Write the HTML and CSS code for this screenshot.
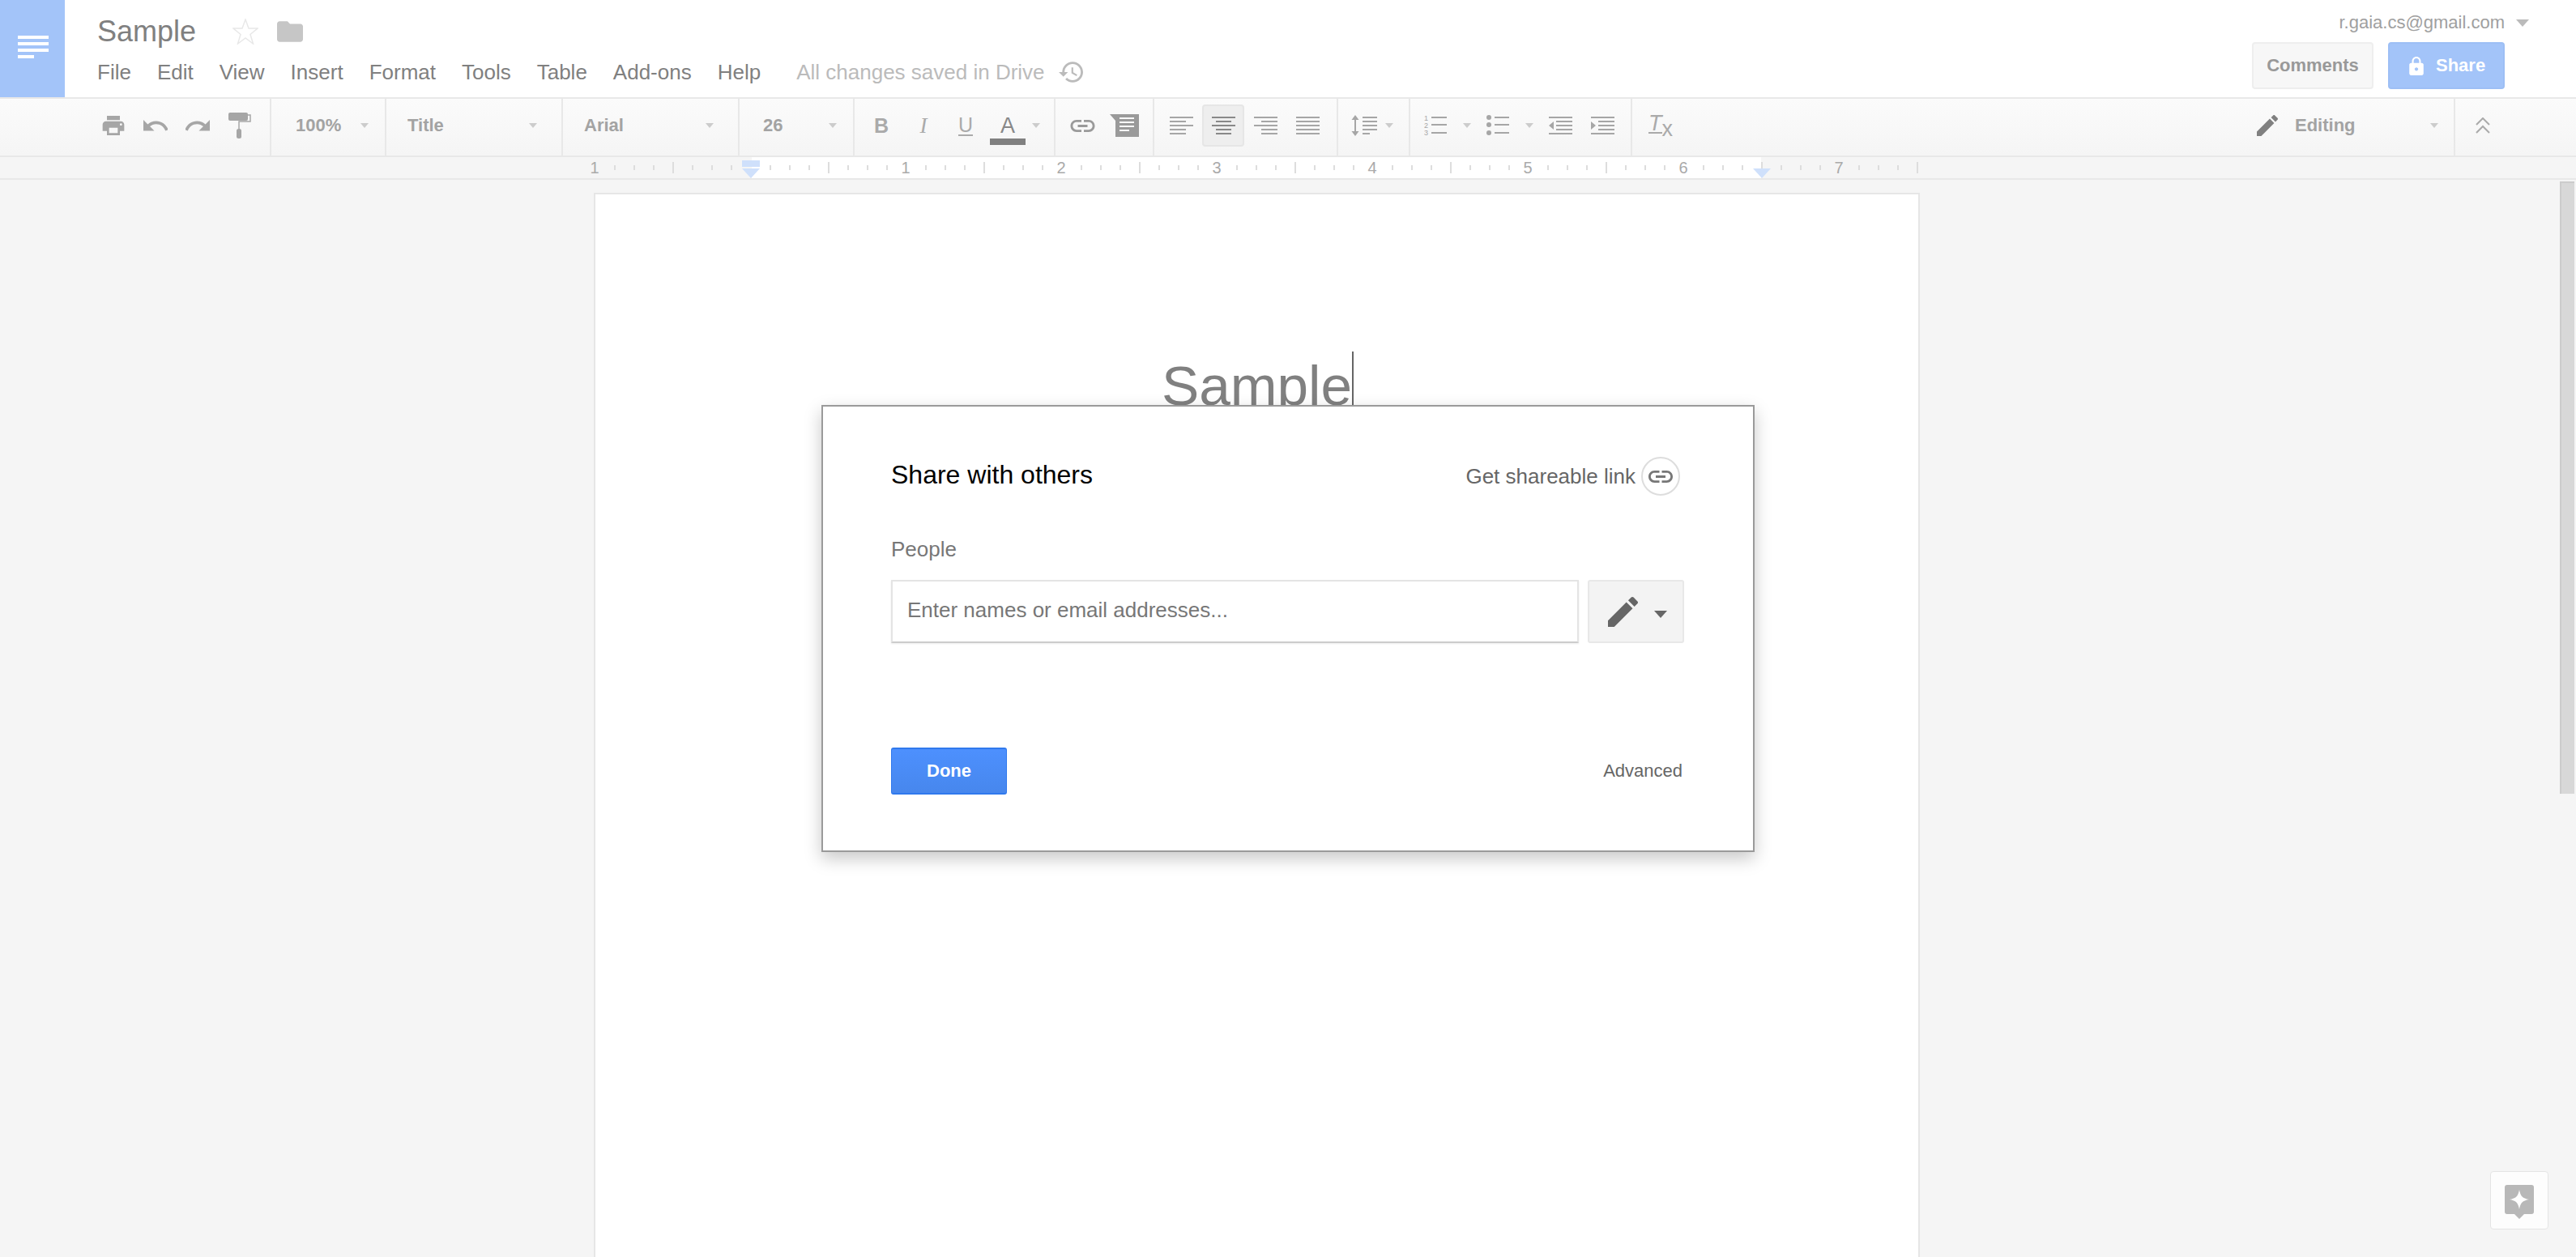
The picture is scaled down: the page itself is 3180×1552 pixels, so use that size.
FILE: index.html
```html
<!DOCTYPE html>
<html lang="en">
<head>
<meta charset="UTF-8">
<meta name="viewport" content="width=device-width, initial-scale=1.0">
<title>Sample - Share with others</title>
<link rel="stylesheet" href="styles.css">
</head>
<body>

<!-- top bar -->
<header class="topbar">
    <div class="logo">
        <span class="logo-line"></span>
        <span class="logo-line"></span>
        <span class="logo-line"></span>
        <span class="logo-line short"></span>
    </div>
    <div class="doc-info">
        <div class="title-row">
            <span class="doc-title">Sample</span>
            <svg class="star" viewBox="0 0 32 32"><polygon points="16,1 20,12 31,12 22,19.500 25.500,31 16,24 6.500,31 10,19.500 1,12 12,12"/></svg>
            <svg class="folder" viewBox="2 4 20 16"><path d="M10 4H4c-1.100 0-1.990.9-1.990 2L2 18c0 1.100.9 2 2 2h16c1.100 0 2-.9 2-2V8c0-1.100-.9-2-2-2h-8l-2-2z"/></svg>
        </div>
        <nav class="menu-row">
            <span>File</span>
            <span>Edit</span>
            <span>View</span>
            <span>Insert</span>
            <span>Format</span>
            <span>Tools</span>
            <span>Table</span>
            <span>Add-ons</span>
            <span>Help</span>
            <span class="saved">All changes saved in Drive</span>
            <svg class="history" viewBox="1 3 21 18"><path d="M13 3c-4.970 0-9 4.030-9 9H1l3.890 3.890.07.14L9 12H6c0-3.870 3.130-7 7-7s7 3.130 7 7-3.130 7-7 7c-1.930 0-3.680-.79-4.940-2.060l-1.420 1.420C8.270 19.990 10.510 21 13 21c4.970 0 9-4.030 9-9s-4.030-9-9-9zm-1 5v5l4.280 2.540.72-1.210-3.500-2.080V8H12z"/></svg>
        </nav>
    </div>
    <div class="top-right">
        <div class="account">
            <span>r.gaia.cs@gmail.com</span>
            <i class="account-arrow"></i>
        </div>
        <div class="top-buttons">
            <button class="btn-comments">Comments</button>
            <button class="btn-share">
                <svg class="lock" viewBox="4 1 16 21"><path d="M18 8h-1V6c0-2.760-2.240-5-5-5S7 3.240 7 6v2H6c-1.100 0-2 .9-2 2v10c0 1.100.9 2 2 2h12c1.100 0 2-.9 2-2V10c0-1.100-.9-2-2-2zm-6 9c-1.100 0-2-.9-2-2s.9-2 2-2 2 .9 2 2-.9 2-2 2zm3.100-9H8.900V6c0-1.710 1.390-3.100 3.100-3.100 1.710 0 3.100 1.390 3.100 3.100v2z"/></svg>
                Share
            </button>
        </div>
    </div>
</header>

<!-- toolbar -->
<div class="toolbar">
    <div class="group g-history">
        <span class="tb-btn"><svg class="ic-print" viewBox="2 3 20 18"><path d="M19 8H5c-1.660 0-3 1.340-3 3v6h4v4h12v-4h4v-6c0-1.660-1.340-3-3-3zm-3 11H8v-5h8v5zm3-7c-.55 0-1-.45-1-1s.45-1 1-1 1 .45 1 1-.45 1-1 1zm-1-9H6v4h12V3z"/></svg></span>
        <span class="tb-btn"><svg class="ic-undo" viewBox="2 7 20 10"><path d="M12.500 8c-2.650 0-5.050.99-6.900 2.600L2 7v9h9l-3.620-3.620c1.390-1.160 3.160-1.880 5.120-1.880 3.540 0 6.550 2.310 7.600 5.500l2.370-.78C21.080 11.030 17.150 8 12.500 8z"/></svg></span>
        <span class="tb-btn"><svg class="ic-undo" viewBox="2 7 20 10"><path d="M18.400 10.600C16.550 8.990 14.150 8 11.500 8c-4.650 0-8.580 3.030-9.960 7.220L3.900 16c1.050-3.190 4.050-5.500 7.600-5.500 1.950 0 3.730.72 5.120 1.880L13 16h9V7l-3.600 3.600z"/></svg></span>
        <span class="tb-btn"><svg class="ic-roller" viewBox="0 0 28 32"><rect width="24" height="10" rx="2"/><path class="roller-arm" d="M24 3h3v8H13v9"/><rect x="10" y="20" width="6" height="12" rx="2.500"/></svg></span>
    </div>
    <div class="group tb-select g-zoom"><span>100%</span><i class="arrow"></i></div>
    <div class="group tb-select g-style"><span>Title</span><i class="arrow"></i></div>
    <div class="group tb-select g-style"><span>Arial</span><i class="arrow"></i></div>
    <div class="group tb-select g-size"><span>26</span><i class="arrow"></i></div>
    <div class="group g-text">
        <span class="tb-btn glyph-b">B</span>
        <span class="tb-btn glyph-i">I</span>
        <span class="tb-btn"><span class="glyph-u">U</span></span>
        <span class="tb-btn color-btn"><span class="glyph-a">A</span><span class="color-bar"></span></span>
        <i class="arrow"></i>
    </div>
    <div class="group g-insert">
        <span class="tb-btn"><svg class="ic-link" viewBox="2 7 20 10"><path d="M3.900 12c0-1.710 1.390-3.100 3.100-3.100h4V7H7c-2.760 0-5 2.240-5 5s2.240 5 5 5h4v-1.900H7c-1.710 0-3.100-1.390-3.100-3.100zM8 13h8v-2H8v2zm9-6h-4v1.900h4c1.710 0 3.100 1.390 3.100 3.100s-1.390 3.100-3.100 3.100h-4V17h4c2.760 0 5-2.240 5-5s-2.240-5-5-5z"/></svg></span>
        <span class="tb-btn"><svg class="ic-comment" viewBox="0 0 36 28"><path d="M0 0h36v28H7V8z"/><path class="cut" d="M12 4h18v2H12zM12 9h18v2H12zM12 14h18v2H12zM12 19h12v2H12z"/></svg></span>
    </div>
    <div class="group g-align">
        <span class="tb-btn"><svg class="ic-lines" viewBox="0 0 29 22"><path d="M0 0h29v2H0zM0 5h20v2H0zM0 10h29v2H0zM0 15h20v2H0zM0 20h20v2H0z"/></svg></span>
        <span class="tb-btn active"><svg class="ic-lines" viewBox="0 0 29 22"><path d="M0 0h29v2H0zM5 5h19v2H5zM0 10h29v2H0zM5 15h19v2H5zM5 20h19v2H5z"/></svg></span>
        <span class="tb-btn"><svg class="ic-lines" viewBox="0 0 29 22"><path d="M0 0h29v2H0zM9 5h20v2H9zM0 10h29v2H0zM9 15h20v2H9zM9 20h20v2H9z"/></svg></span>
        <span class="tb-btn"><svg class="ic-lines" viewBox="0 0 29 22"><path d="M0 0h29v2H0zM0 5h29v2H0zM0 10h29v2H0zM0 15h29v2H0zM0 20h29v2H0z"/></svg></span>
    </div>
    <div class="group g-spacing">
        <span class="tb-btn"><svg class="ic-spacing" viewBox="0 0 32 26"><path d="M5 0l4.500 6H6v14h3.500L5 26 .5 20H4V6H.5zM14 2h18v2H14zM14 7h18v2H14zM14 12h18v2H14zM14 17h18v2H14zM14 22h9v2h-9z"/></svg></span>
        <i class="arrow"></i>
    </div>
    <div class="group g-list">
        <span class="tb-btn"><svg class="ic-list" viewBox="0 0 28 26"><text x="0" y="7">1</text><text x="0" y="16">2</text><text x="0" y="25">3</text><path d="M9 2h19v2H9zM9 11h19v2H9zM9 21h19v2H9z"/></svg></span>
        <span class="drop"><i class="arrow"></i></span>
        <span class="tb-btn"><svg class="ic-list" viewBox="0 0 28 26"><circle cx="3" cy="3" r="3"/><circle cx="3" cy="12" r="3"/><circle cx="3" cy="22" r="3"/><path d="M10 2h18v2H10zM10 11h18v2H10zM10 21h18v2H10z"/></svg></span>
        <span class="drop"><i class="arrow"></i></span>
        <span class="tb-btn"><svg class="ic-lines" viewBox="0 0 29 22"><path d="M0 0h29v2H0zM9 5h20v2H9zM9 10h20v2H9zM9 15h20v2H9zM0 20h29v2H0zM6 6v10l-6-5z"/></svg></span>
        <span class="tb-btn"><svg class="ic-lines" viewBox="0 0 29 22"><path d="M0 0h29v2H0zM9 5h20v2H9zM9 10h20v2H9zM9 15h20v2H9zM0 20h29v2H0zM0 6v10l6-5z"/></svg></span>
    </div>
    <div class="g-clear">
        <span class="clear-t">T</span><span class="clear-x">x</span>
    </div>
    <div class="group g-mode">
        <svg class="ic-pencil" viewBox="3 3 18 18"><path d="M3 17.250V21h3.750L17.810 9.940l-3.750-3.750L3 17.250zM20.710 7.040c.39-.39.39-1.020 0-1.410l-2.340-2.340c-.39-.39-1.020-.39-1.410 0l-1.830 1.830 3.750 3.750 1.830-1.830z"/></svg>
        <span class="mode-label">Editing</span>
        <i class="arrow"></i>
    </div>
    <div class="g-collapse">
        <svg class="ic-chevrons" viewBox="0 0 18 20"><path d="M1 9l8-8 8 8M1 19l8-8 8 8"/></svg>
    </div>
</div>

<!-- ruler -->
<div class="ruler">
    <div class="ruler-scale">
        <div class="ruler-labels">
            <span>1</span>
            <span></span>
            <span>1</span>
            <span>2</span>
            <span>3</span>
            <span>4</span>
            <span>5</span>
            <span>6</span>
            <span>7</span>
        </div>
        <i class="indent-first"></i>
        <i class="indent-left"></i>
        <i class="indent-right"></i>
    </div>
</div>

<!-- document -->
<main class="workspace">
    <div class="page">
        <h1 class="doc-heading">Sample<span class="cursor"></span></h1>
    </div>
    <div class="scrollbar"></div>
    <div class="explore">
        <svg viewBox="0 0 36 42"><path d="M3 0h30a3 3 0 0 1 3 3v30a3 3 0 0 1-3 3h-9l-6 6-6-6H3a3 3 0 0 1-3-3V3a3 3 0 0 1 3-3z"/><path class="spark" d="M18 6c1.500 8 4 10.500 12 12-8 1.500-10.500 4-12 12-1.500-8-4-10.500-12-12 8-1.500 10.500-4 12-12z"/></svg>
    </div>

    <!-- share dialog -->
    <div class="dialog">
        <div class="dialog-head">
            <h2>Share with others</h2>
            <div class="shareable">
                <span>Get shareable link</span>
                <span class="link-circle"><svg viewBox="2 7 20 10"><path d="M3.900 12c0-1.710 1.390-3.100 3.100-3.100h4V7H7c-2.760 0-5 2.240-5 5s2.240 5 5 5h4v-1.900H7c-1.710 0-3.100-1.390-3.100-3.100zM8 13h8v-2H8v2zm9-6h-4v1.900h4c1.710 0 3.100 1.390 3.100 3.100s-1.390 3.100-3.100 3.100h-4V17h4c2.760 0 5-2.240 5-5s-2.240-5-5-5z"/></svg></span>
            </div>
        </div>
        <div class="people-label">People</div>
        <div class="people-row">
            <input class="people-input" type="text" placeholder="Enter names or email addresses...">
            <button class="perm-btn">
                <svg viewBox="3 3 18 18"><path d="M3 17.250V21h3.750L17.810 9.940l-3.750-3.750L3 17.250zM20.710 7.040c.39-.39.39-1.020 0-1.410l-2.340-2.340c-.39-.39-1.020-.39-1.410 0l-1.830 1.830 3.750 3.750 1.830-1.830z"/></svg>
                <i class="perm-arrow"></i>
            </button>
        </div>
        <div class="dialog-foot">
            <button class="btn-done">Done</button>
            <span class="advanced">Advanced</span>
        </div>
    </div>
</main>

</body>
</html>
```

FILE: styles.css
```css
* {
    margin: 0;
    padding: 0;
    box-sizing: border-box;
}

html, body {
    height: 100%;
}

body {
    display: flex;
    flex-direction: column;
    overflow: hidden;
    background: #f5f5f5;
    font-family: "Liberation Sans", Arial, sans-serif;
}

button {
    font-family: inherit;
}

i {
    display: block;
}

/* top bar */
.topbar {
    display: flex;
    flex: none;
    height: 122px;
    background: #fff;
    border-bottom: 2px solid #e8e8e8;
}

.logo {
    display: flex;
    flex-direction: column;
    gap: 4px;
    width: 80px;
    padding: 44px 20px 0 22px;
    background: #a3c4f9;
}

.logo-line {
    display: block;
    height: 4px;
    background: #fff;
}

.logo-line.short {
    width: 20px;
}

.doc-info {
    padding: 19px 0 0 40px;
}

.title-row {
    display: flex;
    align-items: center;
    height: 40px;
}

.doc-title {
    font-size: 36px;
    line-height: 40px;
    color: #808080;
}

.star {
    width: 32px;
    height: 32px;
    margin-left: 45px;
    fill: none;
    stroke: #e8e8e8;
    stroke-width: 1.5;
}

.folder {
    width: 32px;
    height: 26px;
    margin-left: 23px;
    fill: #c6c6c6;
}

.menu-row {
    display: flex;
    align-items: center;
    gap: 32px;
    margin-top: 15px;
    font-size: 26px;
    line-height: 30px;
    color: #808080;
}

.saved {
    margin-left: 12px;
    color: #bbb;
}

.history {
    width: 30px;
    height: 26px;
    margin-left: -15px;
    fill: #bbb;
}

.top-right {
    margin-left: auto;
    padding: 15px 58px 0 0;
}

.account {
    display: flex;
    align-items: center;
    justify-content: flex-end;
    gap: 14px;
    font-size: 22px;
    line-height: 26px;
    color: #a0a0a0;
}

.account-arrow {
    width: 0;
    height: 0;
    border-left: 8px solid transparent;
    border-right: 8px solid transparent;
    border-top: 9px solid #bbb;
}

.top-buttons {
    display: flex;
    gap: 18px;
    margin: 11px 30px 0 0;
}

.top-buttons button {
    height: 58px;
    font-size: 22px;
    font-weight: bold;
    border-radius: 4px;
}

.btn-comments {
    width: 150px;
    color: #999;
    background: #f7f7f7;
    border: 2px solid #eee;
}

.btn-share {
    display: flex;
    align-items: center;
    width: 144px;
    padding-left: 24px;
    color: #fff;
    background: #a3c4f9;
    border: 2px solid #9dbff5;
}

.lock {
    width: 18px;
    height: 23px;
    margin-right: 15px;
    fill: #fff;
}

/* toolbar */
.toolbar {
    display: flex;
    flex: none;
    height: 72px;
    background: linear-gradient(#fbfbfb, #f5f5f5);
    border-bottom: 2px solid #e8e8e8;
}

.group {
    display: flex;
    align-items: center;
    flex: none;
    padding-bottom: 4px;
    border-right: 2px solid #e8e8e8;
}

.g-history { width: 335px; padding-left: 114px; }
.g-zoom { width: 142px; }
.g-style { width: 218px; }
.g-size { width: 142px; }
.g-text { width: 248px; padding-left: 7px; }
.g-insert { width: 122px; padding-left: 7px; }
.g-align { width: 227px; padding-left: 7px; }
.g-spacing { width: 89px; padding-left: 6px; }
.g-list { width: 274px; padding-left: 5px; }

.tb-select {
    justify-content: space-between;
    padding-left: 26px;
    padding-right: 20px;
    font-size: 22px;
    font-weight: bold;
    color: #a3a3a3;
}

.g-style {
    padding-right: 30px;
}

.g-zoom {
    padding-left: 30px;
}

.g-size {
    padding-left: 29px;
}

.tb-btn {
    display: flex;
    align-items: center;
    justify-content: center;
    flex: none;
    width: 52px;
    height: 52px;
    color: #aaa;
    fill: #a6a6a6;
}

.tb-btn.active {
    fill: #888;
    background: #eee;
    border: 2px solid #e6e6e6;
    border-radius: 4px;
}

.arrow {
    width: 0;
    height: 0;
    flex: none;
    border-left: 5px solid transparent;
    border-right: 5px solid transparent;
    border-top: 6px solid #ccc;
}

.drop {
    display: flex;
    justify-content: center;
    width: 25px;
}

.ic-print { width: 28px; height: 24px; }
.ic-undo { width: 30px; height: 15px; }
.ic-roller { width: 28px; height: 32px; }
.roller-arm { fill: none; stroke: #a6a6a6; stroke-width: 1.500; }
.ic-link { width: 37px; height: 15px; fill: #9a9a9a; }
.ic-comment { width: 36px; height: 28px; fill: #9a9a9a; }
.ic-comment .cut { fill: #f8f8f8; }
.ic-lines { width: 29px; height: 22px; }
.ic-spacing { width: 32px; height: 26px; }
.ic-list { width: 28px; height: 26px; }
.ic-list text { font-size: 9px; font-family: "Liberation Sans", sans-serif; }

.glyph-b {
    font-size: 25px;
    font-weight: bold;
}

.glyph-i {
    font-size: 27px;
    font-style: italic;
    font-family: "Liberation Serif", serif;
}

.glyph-u {
    font-size: 25px;
    line-height: 24px;
    border-bottom: 2px solid #aaa;
}

.color-btn {
    flex-direction: column;
    gap: 3px;
    margin-top: 10px;
}

.glyph-a {
    font-size: 27px;
    line-height: 26px;
    color: #888;
}

.color-bar {
    width: 44px;
    height: 8px;
    background: #808080;
}

.g-text .arrow {
    margin-left: 4px;
}

.g-clear {
    display: flex;
    align-items: flex-start;
    padding: 19px 0 0 20px;
    color: #aaa;
}

.clear-t {
    font-size: 27px;
    font-style: italic;
    line-height: 22px;
    border-bottom: 2px solid #aaa;
}

.clear-x {
    margin-top: 8px;
    font-size: 27px;
    line-height: 20px;
}

.g-mode {
    width: 245px;
    margin-left: auto;
    padding-right: 19px;
    font-size: 22px;
    font-weight: bold;
    color: #a3a3a3;
}

.ic-pencil {
    width: 26px;
    height: 26px;
    fill: #808080;
}

.mode-label {
    margin-left: 21px;
}

.g-mode .arrow {
    margin-left: auto;
}

.g-collapse {
    display: flex;
    align-items: center;
    flex: none;
    width: 149px;
    padding: 0 0 4px 25px;
}

.ic-chevrons {
    width: 18px;
    height: 20px;
    fill: none;
    stroke: #aaa;
    stroke-width: 2;
}

/* ruler */
.ruler {
    flex: none;
    height: 28px;
    padding-left: 735px;
    border-bottom: 2px solid #e8e8e8;
}

.ruler-scale {
    position: relative;
    width: 1634px;
    height: 26px;
    background:
        repeating-linear-gradient(90deg, transparent 0 95px, #ddd 95px 97px, transparent 97px 192px) 0 6px / 100% 14px no-repeat,
        repeating-linear-gradient(90deg, transparent 0 23px, #ddd 23px 25px, transparent 25px 47px, #ddd 47px 49px, transparent 49px 71px, #ddd 71px 73px, transparent 73px 119px, #ddd 119px 121px, transparent 121px 143px, #ddd 143px 145px, transparent 145px 167px, #ddd 167px 169px, transparent 169px 192px) 0 10px / 100% 6px no-repeat,
        linear-gradient(90deg, transparent 193px, #fff 193px 1439px, transparent 1439px);
}

.ruler-labels {
    display: flex;
    margin-left: -97px;
    font-size: 20px;
    line-height: 26px;
    color: #aaa;
}

.ruler-labels span {
    flex: none;
    width: 192px;
    text-align: center;
}

.indent-first {
    position: absolute;
    top: 4px;
    left: 181px;
    width: 22px;
    height: 8px;
    background: #cfe0fb;
}

.indent-left,
.indent-right {
    position: absolute;
    top: 14px;
    width: 0;
    height: 0;
    border-left: 11px solid transparent;
    border-right: 11px solid transparent;
    border-top: 12px solid #cfe0fb;
}

.indent-left { left: 181px; }
.indent-right { left: 1429px; }

/* document */
.workspace {
    position: relative;
    flex: 1;
    overflow: hidden;
    padding: 16px 0 0 733px;
}

.page {
    width: 1637px;
    height: 100%;
    padding-top: 194px;
    background: #fff;
    border: 2px solid #e6e6e6;
    border-bottom: 0;
}

.doc-heading {
    font-size: 69.33px;
    font-weight: normal;
    line-height: 80px;
    text-align: center;
    color: #808080;
}

.cursor {
    display: inline-block;
    width: 2px;
    height: 68px;
    margin-right: -2px;
    vertical-align: -2px;
    background: #666;
}

.scrollbar {
    position: absolute;
    top: 2px;
    right: 2px;
    width: 18px;
    height: 756px;
    background: #d8d8d8;
    border-left: 2px solid #ccc;
    border-top: 2px solid #ccc;
}

.explore {
    position: absolute;
    right: 34px;
    bottom: 34px;
    display: flex;
    align-items: flex-start;
    justify-content: center;
    width: 72px;
    height: 72px;
    padding-top: 16px;
    background: #fdfdfd;
    border: 1px solid #e5e5e5;
    border-radius: 4px;
}

.explore svg {
    width: 36px;
    height: 42px;
    fill: #b8b8b8;
}

.explore .spark {
    fill: #fff;
}

/* share dialog */
.dialog {
    position: absolute;
    top: 278px;
    left: 1014px;
    width: 1152px;
    height: 552px;
    padding: 62px 85px 0 84px;
    background: #fff;
    border: 2px solid #9a9a9a;
    box-shadow: 0 8px 20px rgba(0, 0, 0, 0.22);
}

.dialog-head {
    display: flex;
    align-items: center;
    justify-content: space-between;
    height: 48px;
}

.dialog-head h2 {
    padding-bottom: 4px;
    font-size: 32px;
    font-weight: normal;
    color: #000;
}

.shareable {
    display: flex;
    align-items: center;
    gap: 7px;
    padding-right: 5px;
    font-size: 26px;
    color: #666;
}

.link-circle {
    display: flex;
    align-items: center;
    justify-content: center;
    width: 48px;
    height: 48px;
    border: 2px solid #ddd;
    border-radius: 50%;
}

.link-circle svg {
    width: 30px;
    height: 15px;
    fill: #777;
}

.people-label {
    margin-top: 51px;
    font-size: 26px;
    line-height: 30px;
    color: #777;
}

.people-row {
    display: flex;
    gap: 11px;
    margin-top: 23px;
    height: 78px;
}

.people-input {
    width: 849px;
    height: 78px;
    padding: 0 0 3px 18px;
    font-family: inherit;
    font-size: 26px;
    color: #777;
    background: #fff;
    border: 2px solid #e4e4e4;
    border-bottom-color: #ccc;
    outline: none;
    box-shadow: 0 1px 2px rgba(0, 0, 0, 0.08);
}

.people-input::placeholder {
    color: #777;
    opacity: 1;
}

.perm-btn {
    display: flex;
    align-items: center;
    width: 119px;
    height: 78px;
    padding-left: 23px;
    background: #f3f3f3;
    border: 2px solid #e8e8e8;
    border-radius: 3px;
}

.perm-btn svg {
    width: 37px;
    height: 37px;
    fill: #666;
}

.perm-arrow {
    width: 0;
    height: 0;
    margin: 6px 0 0 20px;
    border-left: 8px solid transparent;
    border-right: 8px solid transparent;
    border-top: 9px solid #666;
}

.dialog-foot {
    display: flex;
    align-items: center;
    justify-content: space-between;
    margin-top: 129px;
}

.btn-done {
    width: 143px;
    height: 58px;
    font-size: 22px;
    font-weight: bold;
    color: #fff;
    background: linear-gradient(#4d90fe, #4787ed);
    border: 2px solid #3079ed;
    border-width: 2px 1px;
    border-radius: 3px;
}

.advanced {
    padding-right: 2px;
    font-size: 22px;
    color: #666;
}
```
